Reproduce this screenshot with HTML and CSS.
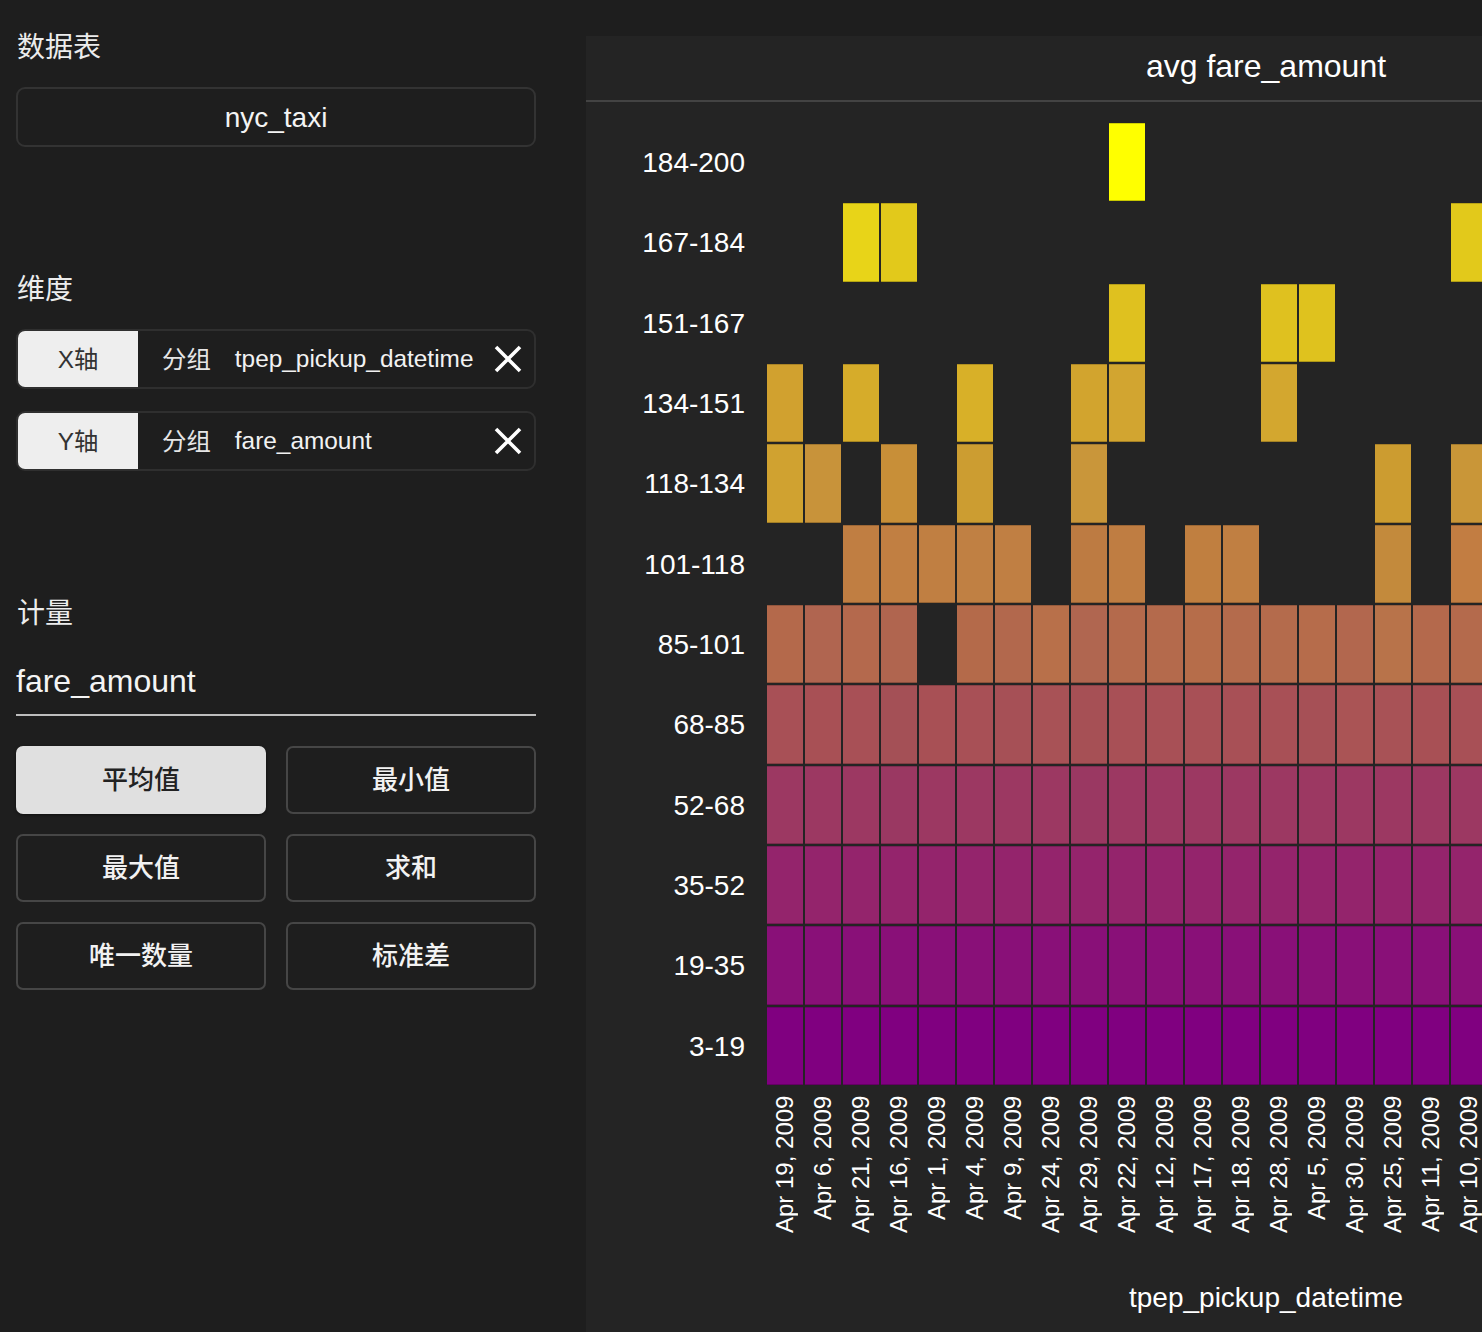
FILE: index.html
```html
<!DOCTYPE html>
<html lang="zh">
<head>
<meta charset="utf-8">
<title>heatmap</title>
<link rel="stylesheet" href="styles.css">
</head>
<body>
<aside class="side">
  <div class="sec-title">数据表</div>
  <div class="select">nyc_taxi</div>

  <div class="sec-title sec-dim">维度</div>
  <div class="axis-row">
    <span class="axis-tag">X轴</span>
    <span class="axis-kind">分组</span>
    <span class="axis-field">tpep_pickup_datetime</span>
    <span class="axis-close"><svg width="28" height="28" viewBox="0 0 28 28"><path d="M2 2 L26 26 M26 2 L2 26" stroke="#fff" stroke-width="3.6" fill="none"/></svg></span>
  </div>
  <div class="axis-row axis-row-y">
    <span class="axis-tag">Y轴</span>
    <span class="axis-kind">分组</span>
    <span class="axis-field">fare_amount</span>
    <span class="axis-close"><svg width="28" height="28" viewBox="0 0 28 28"><path d="M2 2 L26 26 M26 2 L2 26" stroke="#fff" stroke-width="3.6" fill="none"/></svg></span>
  </div>

  <div class="sec-title sec-measure">计量</div>
  <div class="measure-input">fare_amount</div>
  <div class="agg-grid">
    <div class="agg agg-active">平均值</div>
    <div class="agg">最小值</div>
    <div class="agg">最大值</div>
    <div class="agg">求和</div>
    <div class="agg">唯一数量</div>
    <div class="agg">标准差</div>
  </div>
</aside>

<main class="chart">
  <header class="chart-head">avg fare_amount</header>
  <div class="plot">
    <div class="ylabels">
      <div>184-200</div><div>167-184</div><div>151-167</div><div>134-151</div>
      <div>118-134</div><div>101-118</div><div>85-101</div><div>68-85</div>
      <div>52-68</div><div>35-52</div><div>19-35</div><div>3-19</div>
    </div>
    <div class="heat">
      <!-- 184-200 -->
      <i></i><i></i><i></i><i></i><i></i><i></i><i></i><i></i><i></i><b style="background:#ffff00"></b><i></i><i></i><i></i><i></i><i></i><i></i><i></i><i></i><i></i>
      <!-- 167-184 -->
      <i></i><i></i><b style="background:#e8d418"></b><b style="background:#e2c91b"></b><i></i><i></i><i></i><i></i><i></i><i></i><i></i><i></i><i></i><i></i><i></i><i></i><i></i><i></i><b style="background:#e2c91b"></b>
      <!-- 151-167 -->
      <i></i><i></i><i></i><i></i><i></i><i></i><i></i><i></i><i></i><b style="background:#dfc11f"></b><i></i><i></i><i></i><b style="background:#dfc11f"></b><b style="background:#dfc21e"></b><i></i><i></i><i></i><i></i>
      <!-- 134-151 -->
      <b style="background:#d1a12f"></b><i></i><b style="background:#d6ac2a"></b><i></i><i></i><b style="background:#d8b028"></b><i></i><i></i><b style="background:#d2a42e"></b><b style="background:#d2a530"></b><i></i><i></i><i></i><b style="background:#d3a72f"></b><i></i><i></i><i></i><i></i><i></i>
      <!-- 118-134 -->
      <b style="background:#d0a230"></b><b style="background:#c8933a"></b><i></i><b style="background:#c88f38"></b><i></i><b style="background:#cc9d31"></b><i></i><i></i><b style="background:#c9963a"></b><i></i><i></i><i></i><i></i><i></i><i></i><i></i><b style="background:#cc9c30"></b><i></i><b style="background:#c99638"></b>
      <!-- 101-118 -->
      <i></i><i></i><b style="background:#c07e42"></b><b style="background:#c17f42"></b><b style="background:#c07f42"></b><b style="background:#c08043"></b><b style="background:#c07f43"></b><i></i><b style="background:#bd7b42"></b><b style="background:#bf7d42"></b><i></i><b style="background:#c07f40"></b><b style="background:#c07f42"></b><i></i><i></i><i></i><b style="background:#c38a3c"></b><i></i><b style="background:#c27d42"></b>
      <!-- 85-101 -->
      <b style="background:#b4694b"></b><b style="background:#b06550"></b><b style="background:#b4694d"></b><b style="background:#b0654f"></b><i></i><b style="background:#b46a4a"></b><b style="background:#b2684d"></b><b style="background:#b8704a"></b><b style="background:#b06650"></b><b style="background:#b46a4c"></b><b style="background:#b46a4c"></b><b style="background:#b66d4a"></b><b style="background:#b46b4c"></b><b style="background:#b46b4c"></b><b style="background:#b66c4b"></b><b style="background:#b2674e"></b><b style="background:#b8734a"></b><b style="background:#b4694c"></b><b style="background:#b46a4c"></b>
      <!-- 68-85 -->
      <b style="background:#a85056"></b><b style="background:#a85055"></b><b style="background:#a85056"></b><b style="background:#a45056"></b><b style="background:#a85055"></b><b style="background:#a85056"></b><b style="background:#a65056"></b><b style="background:#a85256"></b><b style="background:#a65055"></b><b style="background:#a85056"></b><b style="background:#a85056"></b><b style="background:#a85056"></b><b style="background:#a85056"></b><b style="background:#a85056"></b><b style="background:#a65056"></b><b style="background:#aa5455"></b><b style="background:#a85256"></b><b style="background:#a85055"></b><b style="background:#a85056"></b>
      <!-- 52-68 -->
      <b style="background:#9c3862"></b><b style="background:#9c3862"></b><b style="background:#9c3862"></b><b style="background:#9a3862"></b><b style="background:#9c3862"></b><b style="background:#9c3862"></b><b style="background:#9c3862"></b><b style="background:#9c3862"></b><b style="background:#9a3862"></b><b style="background:#9c3862"></b><b style="background:#9c3862"></b><b style="background:#9c3862"></b><b style="background:#9c3862"></b><b style="background:#9c3862"></b><b style="background:#9c3862"></b><b style="background:#9c3862"></b><b style="background:#9c3862"></b><b style="background:#9c3862"></b><b style="background:#9c3862"></b>
      <!-- 35-52 -->
      <b style="background:#94246c"></b><b style="background:#94246c"></b><b style="background:#94246c"></b><b style="background:#94246c"></b><b style="background:#94246c"></b><b style="background:#94246c"></b><b style="background:#94246c"></b><b style="background:#94246c"></b><b style="background:#94246c"></b><b style="background:#94246c"></b><b style="background:#94246c"></b><b style="background:#94246c"></b><b style="background:#94246c"></b><b style="background:#94246c"></b><b style="background:#94246c"></b><b style="background:#94246c"></b><b style="background:#94246c"></b><b style="background:#94246c"></b><b style="background:#94246c"></b>
      <!-- 19-35 -->
      <b style="background:#891078"></b><b style="background:#891078"></b><b style="background:#891078"></b><b style="background:#891078"></b><b style="background:#891078"></b><b style="background:#891078"></b><b style="background:#891078"></b><b style="background:#891078"></b><b style="background:#891078"></b><b style="background:#891078"></b><b style="background:#891078"></b><b style="background:#891078"></b><b style="background:#891078"></b><b style="background:#891078"></b><b style="background:#891078"></b><b style="background:#891078"></b><b style="background:#891078"></b><b style="background:#891078"></b><b style="background:#891078"></b>
      <!-- 3-19 -->
      <b style="background:#800080"></b><b style="background:#800080"></b><b style="background:#800080"></b><b style="background:#800080"></b><b style="background:#800080"></b><b style="background:#800080"></b><b style="background:#800080"></b><b style="background:#800080"></b><b style="background:#800080"></b><b style="background:#800080"></b><b style="background:#800080"></b><b style="background:#800080"></b><b style="background:#800080"></b><b style="background:#800080"></b><b style="background:#800080"></b><b style="background:#800080"></b><b style="background:#800080"></b><b style="background:#800080"></b><b style="background:#800080"></b>
    </div>
  </div>
  <div class="xlabels">
    <div class="xl">Apr 19, 2009</div>
    <div class="xl">Apr 6, 2009</div>
    <div class="xl">Apr 21, 2009</div>
    <div class="xl">Apr 16, 2009</div>
    <div class="xl">Apr 1, 2009</div>
    <div class="xl">Apr 4, 2009</div>
    <div class="xl">Apr 9, 2009</div>
    <div class="xl">Apr 24, 2009</div>
    <div class="xl">Apr 29, 2009</div>
    <div class="xl">Apr 22, 2009</div>
    <div class="xl">Apr 12, 2009</div>
    <div class="xl">Apr 17, 2009</div>
    <div class="xl">Apr 18, 2009</div>
    <div class="xl">Apr 28, 2009</div>
    <div class="xl">Apr 5, 2009</div>
    <div class="xl">Apr 30, 2009</div>
    <div class="xl">Apr 25, 2009</div>
    <div class="xl">Apr 11, 2009</div>
    <div class="xl">Apr 10, 2009</div>
  </div>
  <div class="xtitle">tpep_pickup_datetime</div>
</main>
</body>
</html>
```

FILE: styles.css
```css
html, body {
  margin: 0;
  padding: 0;
}
body {
  background: #1e1e1e;
  color: #f2f2f2;
  font-family: "Liberation Sans", "Noto Sans CJK SC", sans-serif;
  display: flex;
  align-items: flex-start;
  overflow: hidden;
  height: 1332px;
}

/* ---------- side panel ---------- */
.side {
  flex: 0 0 520px;
  width: 520px;
  padding: 26px 0 0 16px;
}
.sec-title {
  font-size: 28px;
  line-height: 36px;
  padding-top: 4px;
  color: #ececec;
  padding-left: 1px;
}
.sec-dim { margin-top: 121px; }
.sec-measure { margin-top: 121px; }

.select {
  margin-top: 21px;
  height: 60px;
  box-sizing: border-box;
  padding-top: 2px;
  border: 2px solid #333333;
  border-radius: 9px;
  display: flex;
  align-items: center;
  justify-content: center;
  font-size: 28px;
  color: #f4f4f4;
}

.axis-row {
  margin-top: 21px;
  height: 60px;
  box-sizing: border-box;
  border: 2px solid #2f2f2f;
  border-radius: 9px;
  display: flex;
  align-items: center;
  overflow: hidden;
  font-size: 24.4px;
}
.axis-row-y { margin-top: 22px; }
.axis-tag {
  flex: 0 0 120px;
  align-self: stretch;
  box-sizing: border-box;
  padding-bottom: 3px;
  background: #eeeeee;
  color: #333333;
  display: flex;
  align-items: center;
  justify-content: center;
}
.axis-kind {
  margin-left: 24px;
  padding-bottom: 4px;
  color: #e6e6e6;
}
.axis-field {
  margin-left: 24px;
  color: #f2f2f2;
}
.axis-close {
  margin-left: auto;
  margin-right: 12px;
  width: 28px;
  height: 28px;
  display: flex;
}

.measure-input {
  margin-top: 29px;
  font-size: 32px;
  line-height: 40px;
  padding-bottom: 13px;
  border-bottom: 2px solid #bdbdbd;
  color: #f4f4f4;
}

.agg-grid {
  margin-top: 30px;
  display: grid;
  grid-template-columns: 250px 250px;
  grid-auto-rows: 68px;
  gap: 20px;
}
.agg {
  box-sizing: border-box;
  padding-bottom: 5px;
  border: 2px solid #464646;
  border-radius: 7px;
  display: flex;
  align-items: center;
  justify-content: center;
  font-size: 26px;
  font-weight: 500;
  color: #f2f2f2;
}
.agg-active {
  background: #e0e0e0;
  border-color: #e0e0e0;
  color: #222222;
  box-shadow: 0 1px 3px rgba(0, 0, 0, 0.5);
}

/* ---------- chart ---------- */
.chart {
  flex: 0 0 1360px;
  width: 1360px;
  margin: 36px 0 0 50px;
  min-height: 1296px;
  background: #242424;
  color: #ffffff;
}
.chart-head {
  height: 64px;
  border-bottom: 2px solid #434343;
  font-size: 32px;
  line-height: 60px;
  text-align: center;
}
.plot {
  display: flex;
  gap: 22px;
  padding-top: 21px;
}
.ylabels {
  width: 159px;
  display: grid;
  grid-auto-rows: 78.33px;
  row-gap: 2px;
  font-size: 28px;
}
.ylabels div {
  display: flex;
  align-items: center;
  justify-content: flex-end;
  padding-top: 2px;
}
.heat {
  display: grid;
  grid-template-columns: repeat(19, 36px);
  grid-auto-rows: 78.33px;
  gap: 2px;
}
.heat b {
  display: block;
  box-shadow: inset 0 1px 0 rgba(0, 0, 0, 0.18), inset 0 -1px 0 rgba(0, 0, 0, 0.22);
}
.heat i {
  display: block;
}

.xlabels {
  margin: 11px 0 0 181px;
  display: grid;
  grid-template-columns: repeat(19, 36px);
  column-gap: 2px;
  height: 160px;
}
.xl {
  writing-mode: vertical-rl;
  transform: rotate(180deg);
  text-align: end;
  font-size: 24px;
  line-height: 36px;
  height: 160px;
  white-space: nowrap;
}
.xtitle {
  margin-top: 22px;
  font-size: 28px;
  line-height: 40px;
  text-align: center;
}
```
